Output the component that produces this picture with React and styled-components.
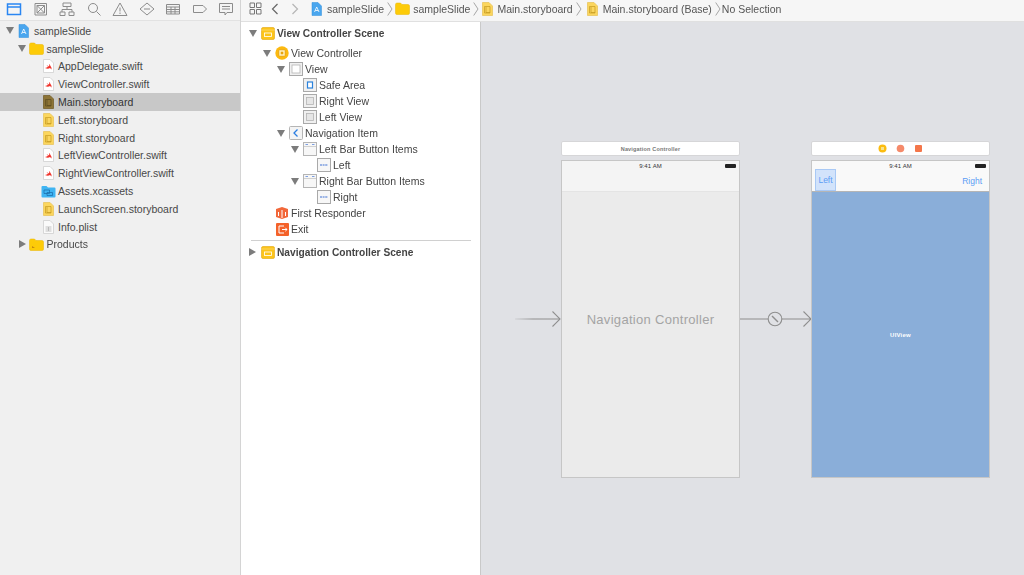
import React from "react";
import styled, { createGlobalStyle } from "styled-components";

const GlobalStyle = createGlobalStyle`
  html, body {
    margin: 0;
    padding: 0;
    height: 100%;
    overflow: hidden;
    background: #fff;
  }
  #root {
    height: 100%;
  }
`;

const Page = styled.div`
  display: flex;
  width: 1024px;
  height: 575px;
  font-family: "Liberation Sans", Arial, sans-serif;
  font-size: 10.5px;
  color: #444;
  overflow: hidden;
  filter: blur(0.3px);
`;

const Navigator = styled.aside`
  width: 240px;
  flex-shrink: 0;
  background: #f0f0f0;
  border-right: 1px solid #d4d4d4;
  display: flex;
  flex-direction: column;
`;

const NavTabs = styled.div`
  height: 21px;
  border-bottom: 1px solid #e2e2e2;
  background: #f4f4f4;
  display: flex;
  align-items: center;
  padding: 0 0 3px 5px;
  gap: 8.5px;
  box-sizing: border-box;
`;

const TabIcon = styled.svg`
  width: 18px;
  height: 16px;
  flex-shrink: 0;
  fill: none;
  stroke: ${(props) => (props.$active ? "#2a86f2" : "#8c8c8c")};
  stroke-width: ${(props) => (props.$active ? 1.5 : 1)};
`;

const Tree = styled.div`
  padding-top: 1px;
`;

const NavRow = styled.div`
  height: 17.8px;
  display: flex;
  align-items: center;
  box-sizing: border-box;
  padding-left: ${(props) => 5 + props.$depth * 12.5}px;
  background: ${(props) => (props.$selected ? "#c8c8c8" : "transparent")};
  color: ${(props) => (props.$selected ? "#333" : "#484848")};
`;

const Disclosure = styled.span`
  width: 9px;
  height: 9px;
  flex-shrink: 0;
  display: flex;
  align-items: center;
  justify-content: center;
  margin-right: ${(props) => props.$gap || 0}px;

  &::before {
    content: "";
    display: ${(props) => (props.$dir ? "block" : "none")};
    border-style: solid;
    border-color: transparent;
    ${(props) =>
      props.$dir === "down"
        ? "border-width: 7px 4px 0 4px; border-top-color: #7c7c7c;"
        : "border-width: 4px 0 4px 7px; border-left-color: #7c7c7c;"}
  }
`;

const Label = styled.span`
  white-space: nowrap;
  font-weight: ${(props) => (props.$bold ? 700 : 400)};
  font-size: ${(props) => (props.$bold ? "10.2px" : "inherit")};
`;

const IconSlot = styled.span`
  width: ${(props) => props.$width || 14}px;
  height: 14px;
  margin-left: ${(props) => props.$left || 0}px;
  margin-right: ${(props) => props.$gap || 2}px;
  flex-shrink: 0;
  display: flex;
  align-items: center;
  justify-content: center;

  svg {
    display: block;
  }
`;

const Outline = styled.section`
  width: 239px;
  flex-shrink: 0;
  background: #fff;
  border-right: 1px solid #c9c9c9;
`;

const Right = styled.div`
  flex: 1;
  display: flex;
  flex-direction: column;
  min-width: 0;
`;

const JumpBar = styled.header`
  height: 22px;
  box-sizing: border-box;
  background: #f6f6f6;
  border-bottom: 1px solid #e0e0e0;
  display: flex;
  align-items: center;
  padding: 0 0 4px 8px;
  flex-shrink: 0;
`;

const Crumb = styled.span`
  white-space: nowrap;
  color: #555;
`;

const CrumbChevron = styled.svg`
  width: 6px;
  height: 14px;
  flex-shrink: 0;
  margin: 0 ${(props) => props.$after}px 0 3px;
  fill: none;
  stroke: #a5a5a5;
`;

const Panels = styled.div`
  flex: 1;
  display: flex;
  min-height: 0;
`;

const OutlineList = styled.div`
  padding-top: 3px;
`;

const SceneRow = styled.div`
  height: 16px;
  display: flex;
  align-items: center;
  padding-left: ${(props) => 7 + props.$depth * 14}px;
  margin-top: ${(props) => props.$top || 0}px;
`;

const Divider = styled.div`
  height: 1px;
  background: #d0d0d0;
  margin: 3px 9px 3px 10px;
`;

const Canvas = styled.main`
  flex: 1;
  position: relative;
  background: #e0e1e5;
  min-width: 0;
`;

const Scene = styled.div`
  position: absolute;
  left: ${(props) => props.$left}px;
  top: 119px;
  width: 179px;
  display: flex;
  flex-direction: column;
  gap: 4px;
`;

const SceneDock = styled.div`
  height: 15px;
  box-sizing: border-box;
  background: #fff;
  border: 1px solid #d6d6d8;
  border-radius: 2px;
  display: flex;
  align-items: center;
  justify-content: center;
  gap: 9px;
  font-size: 5.5px;
  font-weight: 700;
  letter-spacing: 0.17px;
  color: #777;
`;

const Phone = styled.div`
  height: 318px;
  box-sizing: border-box;
  border: 1px solid #c6c6c6;
  display: flex;
  flex-direction: column;
  background: ${(props) => (props.$blue ? "#8aaed9" : "#ebebeb")};
`;

const NavBar = styled.div`
  height: 31px;
  box-sizing: border-box;
  flex-shrink: 0;
  position: relative;
  background: ${(props) => (props.$blue ? "#f9f9f9" : "#f4f4f4")};
  border-bottom: 1px solid ${(props) => (props.$blue ? "#b5b5b5" : "#e4e4e4")};
`;

const StatusTime = styled.span`
  position: absolute;
  top: 1px;
  left: 0;
  right: 0;
  text-align: center;
  font-size: 6px;
  letter-spacing: 0.1px;
  line-height: 8px;
  color: #333;
`;

const Battery = styled.span`
  position: absolute;
  top: 3px;
  right: 3px;
  width: 11px;
  height: 4px;
  background: #222;
  border-radius: 1px;
`;

const BarButton = styled.span`
  position: absolute;
  top: ${(props) => (props.$selected ? "8px" : "16px")};
  ${(props) => (props.$selected ? "left: 3px;" : "right: 7px;")}
  ${(props) => (props.$selected ? "width: 21px; height: 22px;" : "")}
  box-sizing: border-box;
  display: flex;
  align-items: center;
  justify-content: center;
  font-size: 8.5px;
  line-height: 8px;
  color: #5c9df5;
  ${(props) =>
    props.$selected
      ? "background: #d2e3fb; border: 1px solid #a9c9f5;"
      : ""}
`;

const PhoneBody = styled.div`
  flex: 1;
  display: flex;
  align-items: center;
  justify-content: center;
  padding-bottom: ${(props) => props.$lift || 0}px;
`;

const BigTitle = styled.span`
  font-size: 13px;
  letter-spacing: 0.3px;
  color: #a4a4a4;
`;

const UiViewLabel = styled.span`
  font-size: 6px;
  font-weight: 700;
  letter-spacing: 0.2px;
  color: #fff;
`;

const Segue = styled.svg`
  position: absolute;
  top: ${(props) => props.$top}px;
  left: ${(props) => props.$left}px;
  fill: none;
  stroke: #8e8e8e;
  stroke-width: 1.1;
`;

const FolderIcon = ({ products }) => (
  <svg width="15" height="13" viewBox="0 0 15 13">
    <path d="M0.5 2.5 Q0.5 1 2 1 H5.5 L7 2.5 H13 Q14.5 2.5 14.5 4 V11 Q14.5 12.5 13 12.5 H2 Q0.5 12.5 0.5 11 Z" fill="#fdcb08" stroke="#e9b500" strokeWidth="0.5" />
    {products && <path d="M3 10 L3 8 L6 10 Z" fill="#c58a10" />}
  </svg>
);

const ProjectIcon = () => (
  <svg width="11" height="14" viewBox="0 0 11 14">
    <path d="M1 0.5 H7 L10.5 4 V13.5 H1 Z" fill="#4aa6ee" stroke="#2f8fdc" strokeWidth="0.5" />
    <path d="M3.5 10 L5.7 5 L8 10 M4.3 8.5 H7.2" fill="none" stroke="#fff" strokeWidth="0.8" />
  </svg>
);

const SwiftIcon = () => (
  <svg width="11" height="14" viewBox="0 0 11 14">
    <path d="M0.5 0.5 H7 L10.5 4 V13.5 H0.5 Z" fill="#fff" stroke="#cfcfcf" strokeWidth="0.8" />
    <path d="M2 9 Q5 10.5 7 9 L8.5 10.5 Q9 8.5 7.5 7 Q7 5.5 6 5 Q6.5 6.5 6 7.5 L3.5 6 L5 7.8 Q4 8.6 2 9 Z" fill="#f0342c" />
  </svg>
);

const StoryboardIcon = ({ dark }) => (
  <svg width="11" height="14" viewBox="0 0 11 14">
    <path d="M0.5 0.5 H7 L10.5 4 V13.5 H0.5 Z" fill={dark ? "#8d7436" : "#fbd65e"} stroke={dark ? "#75602c" : "#e9c560"} strokeWidth="0.8" />
    <path d="M2.5 4.5 H8 V11 H2.5 Z" fill="none" stroke={dark ? "#5c4a20" : "#c49a20"} strokeWidth="0.7" />
    <path d="M4 5 V10.5 H8" fill="none" stroke={dark ? "#5c4a20" : "#c49a20"} strokeWidth="0.7" />
  </svg>
);

const AssetsIcon = () => (
  <svg width="15" height="13" viewBox="0 0 15 13">
    <path d="M0.5 2 Q0.5 1 1.5 1 H5.5 L7 2.5 H13.5 Q14.5 2.5 14.5 3.5 V11.5 Q14.5 12.5 13.5 12.5 H1.5 Q0.5 12.5 0.5 11.5 Z" fill="#3fb4f2" />
    <path d="M3 5 H8.5 V8.5 H3 Z M6 7.5 H11.5 V10.5 H6 Z" fill="none" stroke="#1a6aa8" strokeWidth="0.7" />
  </svg>
);

const PlistIcon = () => (
  <svg width="11" height="14" viewBox="0 0 11 14">
    <path d="M0.5 0.5 H7 L10.5 4 V13.5 H0.5 Z" fill="#fafafa" stroke="#cfcfcf" strokeWidth="0.8" />
    <path d="M2.5 7 H8.5 M2.5 9 H8.5 M2.5 11 H8.5 M5.5 7 V11" fill="none" stroke="#aaa" strokeWidth="0.7" />
  </svg>
);

const SceneIcon = () => (
  <svg width="14" height="13" viewBox="0 0 14 13">
    <rect x="0.5" y="0.5" width="13" height="12" rx="1.5" fill="#fcc419" stroke="#e2a60e" strokeWidth="0.6" />
    <path d="M0.5 3 H13.5" stroke="#fff" strokeWidth="0.6" strokeDasharray="1 1" />
    <rect x="3.5" y="6" width="7" height="3.5" fill="none" stroke="#fff" strokeWidth="0.8" />
  </svg>
);

const ControllerIcon = () => (
  <svg width="14" height="14" viewBox="0 0 14 14">
    <circle cx="7" cy="7" r="6.7" fill="#fcb90f" />
    <rect x="3.8" y="3.8" width="6.4" height="6.4" rx="0.8" fill="#fff4c8" stroke="#e59c00" strokeWidth="0.8" />
    <rect x="5.7" y="5.7" width="2.6" height="2.6" fill="#e9a40b" />
  </svg>
);

const ViewIcon = ({ kind }) => (
  <svg width="14" height="14" viewBox="0 0 14 14">
    <rect x="0.5" y="0.5" width="13" height="13" fill="#f0f0f0" stroke="#a9a9a9" />
    {kind === "plain" && <rect x="3" y="3" width="8" height="8" fill="#fff" stroke="#b5b5b5" strokeWidth="0.8" />}
    {kind === "safe" && <rect x="4.5" y="4" width="5" height="6" fill="#fff" stroke="#2a82dd" strokeWidth="1.2" />}
    {kind === "sub" && <rect x="3.5" y="3.5" width="7" height="7" fill="#e6e6e6" stroke="#b5b5b5" strokeWidth="0.8" />}
  </svg>
);

const NavItemIcon = () => (
  <svg width="14" height="14" viewBox="0 0 14 14">
    <rect x="0.5" y="0.5" width="13" height="13" rx="1" fill="#f4f4f4" stroke="#b5b5b5" />
    <path d="M8.5 3.5 L5 7 L8.5 10.5" fill="none" stroke="#2a7de1" strokeWidth="1.3" />
  </svg>
);

const BarItemsIcon = () => (
  <svg width="14" height="14" viewBox="0 0 14 14">
    <rect x="0.5" y="0.5" width="13" height="13" fill="#f7f7f7" stroke="#b5b5b5" />
    <path d="M1 4.5 H13" stroke="#d0d0d0" />
    <path d="M2.5 2.5 H5 M9 2.5 H11.5" stroke="#7d9fe0" />
  </svg>
);

const BarItemIcon = () => (
  <svg width="14" height="14" viewBox="0 0 14 14">
    <rect x="0.5" y="0.5" width="13" height="13" fill="#f7f7f7" stroke="#a9a9a9" />
    <path d="M3 7 H11" stroke="#7d9fe0" strokeWidth="1.6" strokeDasharray="2 0.6" />
  </svg>
);

const ResponderIcon = () => (
  <svg width="14" height="14" viewBox="0 0 14 14">
    <path d="M1 3 L7 1 L13 3 V11 L7 13 L1 11 Z" fill="#f2683a" />
    <path d="M3.5 6 V10 M7 4 V12 M10.5 6 V10" stroke="#fff" strokeWidth="1" />
  </svg>
);

const ExitIcon = () => (
  <svg width="13" height="13" viewBox="0 0 13 13">
    <rect width="13" height="13" rx="1" fill="#f4622a" />
    <path d="M8 3 H3 V10 H8 M6 6.5 H11 M9.3 4.8 L11 6.5 L9.3 8.2" fill="none" stroke="#fff" strokeWidth="1" />
  </svg>
);

const Chevron = ({ after }) => (
  <CrumbChevron $after={after} viewBox="0 0 6 14">
    <path d="M0.7 0.5 L5 7 L0.7 13.5" />
  </CrumbChevron>
);

const NavTabIcons = () => (
  <>
    <TabIcon $active viewBox="0 0 18 16">
      <path d="M2.5 3 H15.5 V13.5 H2.5 Z M2.5 6 H15.5" />
    </TabIcon>
    <TabIcon viewBox="0 0 18 16">
      <path d="M3 2.5 H14.5 V14 H3 Z M5 4.5 H12.5 V12 H5 Z M5 4.5 L12.5 12 M12.5 4.5 L5 12" />
    </TabIcon>
    <TabIcon viewBox="0 0 18 16">
      <path d="M5 2 H13 V5.5 H5 Z M9 5.5 V8.5 M4 11 V8.5 H14 V11 M2 11 H7 V14.5 H2 Z M11 11 H16 V14.5 H11 Z" />
    </TabIcon>
    <TabIcon viewBox="0 0 18 16">
      <circle cx="8" cy="7" r="4.5" />
      <path d="M11.5 10.5 L15.5 14.5" />
    </TabIcon>
    <TabIcon viewBox="0 0 18 16">
      <path d="M9 2 L16 14.5 H2 Z M9 6.5 V10.5 M9 11.5 V13" />
    </TabIcon>
    <TabIcon viewBox="0 0 18 16">
      <path d="M9 2 L16 8 L9 14 L2 8 Z M6 8 H12" />
    </TabIcon>
    <TabIcon viewBox="0 0 18 16">
      <path d="M2.5 3.5 H15.5 V13 H2.5 Z M2.5 6 H15.5 M2.5 8.5 H15.5 M2.5 10.8 H15.5 M7 6 V13 M11 6 V13" />
    </TabIcon>
    <TabIcon viewBox="0 0 18 16">
      <path d="M2.5 4.5 H12 L15.5 8 L12 11.5 H2.5 Z" />
    </TabIcon>
    <TabIcon viewBox="0 0 18 16">
      <path d="M2.5 2.5 H15.5 V11.5 H10 L8 14 V11.5 H2.5 Z M5 5.5 H13 M5 8 H13" />
    </TabIcon>
  </>
);

const files = [
  { depth: 0, open: "down", icon: <ProjectIcon />, name: "sampleSlide", width: 11, gap: 5 },
  { depth: 1, open: "down", icon: <FolderIcon />, name: "sampleSlide", width: 15, gap: 3, before: 2 },
  { depth: 2, icon: <SwiftIcon />, name: "AppDelegate.swift" },
  { depth: 2, icon: <SwiftIcon />, name: "ViewController.swift" },
  { depth: 2, icon: <StoryboardIcon dark />, name: "Main.storyboard", selected: true },
  { depth: 2, icon: <StoryboardIcon />, name: "Left.storyboard" },
  { depth: 2, icon: <StoryboardIcon />, name: "Right.storyboard" },
  { depth: 2, icon: <SwiftIcon />, name: "LeftViewController.swift" },
  { depth: 2, icon: <SwiftIcon />, name: "RightViewController.swift" },
  { depth: 2, icon: <AssetsIcon />, name: "Assets.xcassets", width: 15, gap: 2, before: 2 },
  { depth: 2, icon: <StoryboardIcon />, name: "LaunchScreen.storyboard" },
  { depth: 2, icon: <PlistIcon />, name: "Info.plist" },
  { depth: 1, open: "right", icon: <FolderIcon products />, name: "Products", width: 15, gap: 3, before: 2 },
];

const outline = [
  { depth: 1, open: "down", icon: <ControllerIcon />, name: "View Controller", top: 4 },
  { depth: 2, open: "down", icon: <ViewIcon kind="plain" />, name: "View" },
  { depth: 3, icon: <ViewIcon kind="safe" />, name: "Safe Area" },
  { depth: 3, icon: <ViewIcon kind="sub" />, name: "Right View" },
  { depth: 3, icon: <ViewIcon kind="sub" />, name: "Left View" },
  { depth: 2, open: "down", icon: <NavItemIcon />, name: "Navigation Item" },
  { depth: 3, open: "down", icon: <BarItemsIcon />, name: "Left Bar Button Items" },
  { depth: 4, icon: <BarItemIcon />, name: "Left" },
  { depth: 3, open: "down", icon: <BarItemsIcon />, name: "Right Bar Button Items" },
  { depth: 4, icon: <BarItemIcon />, name: "Right" },
  { depth: 1, icon: <ResponderIcon />, name: "First Responder" },
  { depth: 1, icon: <ExitIcon />, name: "Exit" },
];

const OutlineRow = ({ depth, open, icon, name, bold, top }) => (
  <SceneRow $depth={depth} $top={top}>
    <Disclosure $dir={open} $gap={4} />
    <IconSlot $width={14} $gap={2}>{icon}</IconSlot>
    <Label $bold={bold}>{name}</Label>
  </SceneRow>
);

export default function App() {
  return (
    <Page>
      <GlobalStyle />
      <Navigator>
        <NavTabs>
          <NavTabIcons />
        </NavTabs>
        <Tree>
          {files.map((file, i) => (
            <NavRow key={i} $depth={file.depth} $selected={file.selected}>
              <Disclosure $dir={file.open} $gap={4} />
              <IconSlot $width={file.width || 11} $gap={file.gap || 4} $left={file.before ? -file.before : 0}>
                {file.icon}
              </IconSlot>
              <Label>{file.name}</Label>
            </NavRow>
          ))}
        </Tree>
      </Navigator>
      <Right>
        <JumpBar>
          <IconSlot $width={13} $gap={9}>
            <svg width="13" height="13" viewBox="0 0 13 13" fill="none" stroke="#777">
              <path d="M1 1 H5.5 V5.5 H1 Z M7.5 1 H12 V5.5 H7.5 Z M1 7.5 H5.5 V12 H1 Z M7.5 7.5 H12 V12 H7.5 Z" />
            </svg>
          </IconSlot>
          <IconSlot $width={8} $gap={12}>
            <svg width="8" height="12" viewBox="0 0 8 12" fill="none" stroke="#666" strokeWidth="1.2">
              <path d="M6.5 1 L1.5 6 L6.5 11" />
            </svg>
          </IconSlot>
          <IconSlot $width={8} $gap={12}>
            <svg width="8" height="12" viewBox="0 0 8 12" fill="none" stroke="#b5b5b5" strokeWidth="1.2">
              <path d="M1.5 1 L6.5 6 L1.5 11" />
            </svg>
          </IconSlot>
          <IconSlot $width={11} $gap={5}><ProjectIcon /></IconSlot>
          <Crumb>sampleSlide</Crumb>
          <Chevron after={2} />
          <IconSlot $width={15} $gap={3}><FolderIcon /></IconSlot>
          <Crumb>sampleSlide</Crumb>
          <Chevron after={3} />
          <IconSlot $width={11} $gap={4}><StoryboardIcon /></IconSlot>
          <Crumb>Main.storyboard</Crumb>
          <Chevron after={5} />
          <IconSlot $width={11} $gap={5}><StoryboardIcon /></IconSlot>
          <Crumb>Main.storyboard (Base)</Crumb>
          <Chevron after={1} />
          <Crumb>No Selection</Crumb>
        </JumpBar>
        <Panels>
          <Outline>
            <OutlineList>
              <OutlineRow depth={0} open="down" icon={<SceneIcon />} name="View Controller Scene" bold />
              {outline.map((item, i) => (
                <OutlineRow key={i} {...item} />
              ))}
              <Divider />
              <OutlineRow depth={0} open="right" icon={<SceneIcon />} name="Navigation Controller Scene" bold />
            </OutlineList>
          </Outline>
          <Canvas>
            <Segue $left={34} $top={289} width="46" height="16" viewBox="0 0 46 16">
              <defs>
                <linearGradient id="entryFade" x1="0" x2="1" y1="0" y2="0">
                  <stop offset="0" stopColor="#8e8e8e" stopOpacity="0.2" />
                  <stop offset="0.4" stopColor="#8e8e8e" />
                </linearGradient>
              </defs>
              <rect x="0" y="7.5" width="45" height="1" fill="url(#entryFade)" stroke="none" />
              <path d="M37.5 0.5 L45 8 L37.5 15.5" />
            </Segue>
            <Scene $left={80}>
              <SceneDock>Navigation Controller</SceneDock>
              <Phone>
                <NavBar>
                  <StatusTime>9:41 AM</StatusTime>
                  <Battery />
                </NavBar>
                <PhoneBody $lift={31}>
                  <BigTitle>Navigation Controller</BigTitle>
                </PhoneBody>
              </Phone>
            </Scene>
            <Segue $left={259} $top={289} width="72" height="16" viewBox="0 0 72 16">
              <path d="M0 8 H28 M42 8 H71 M63.5 0.5 L71 8 L63.5 15.5" />
              <circle cx="35" cy="8" r="6.8" />
              <path d="M32 5 L38 11" strokeWidth="1.4" />
            </Segue>
            <Scene $left={330}>
              <SceneDock>
                <svg width="9" height="9" viewBox="0 0 9 9">
                  <circle cx="4.5" cy="4.5" r="4" fill="#fbbc10" />
                  <rect x="3" y="3" width="3" height="3" fill="#f7e28a" />
                </svg>
                <svg width="9" height="9" viewBox="0 0 9 9">
                  <circle cx="4.5" cy="4.5" r="3.8" fill="#f58a6a" />
                </svg>
                <svg width="9" height="9" viewBox="0 0 9 9">
                  <rect x="1" y="1" width="7" height="7" rx="1" fill="#f4764a" />
                </svg>
              </SceneDock>
              <Phone $blue>
                <NavBar $blue>
                  <StatusTime>9:41 AM</StatusTime>
                  <Battery />
                  <BarButton $selected>Left</BarButton>
                  <BarButton>Right</BarButton>
                </NavBar>
                <PhoneBody>
                  <UiViewLabel>UIView</UiViewLabel>
                </PhoneBody>
              </Phone>
            </Scene>
          </Canvas>
        </Panels>
      </Right>
    </Page>
  );
}
